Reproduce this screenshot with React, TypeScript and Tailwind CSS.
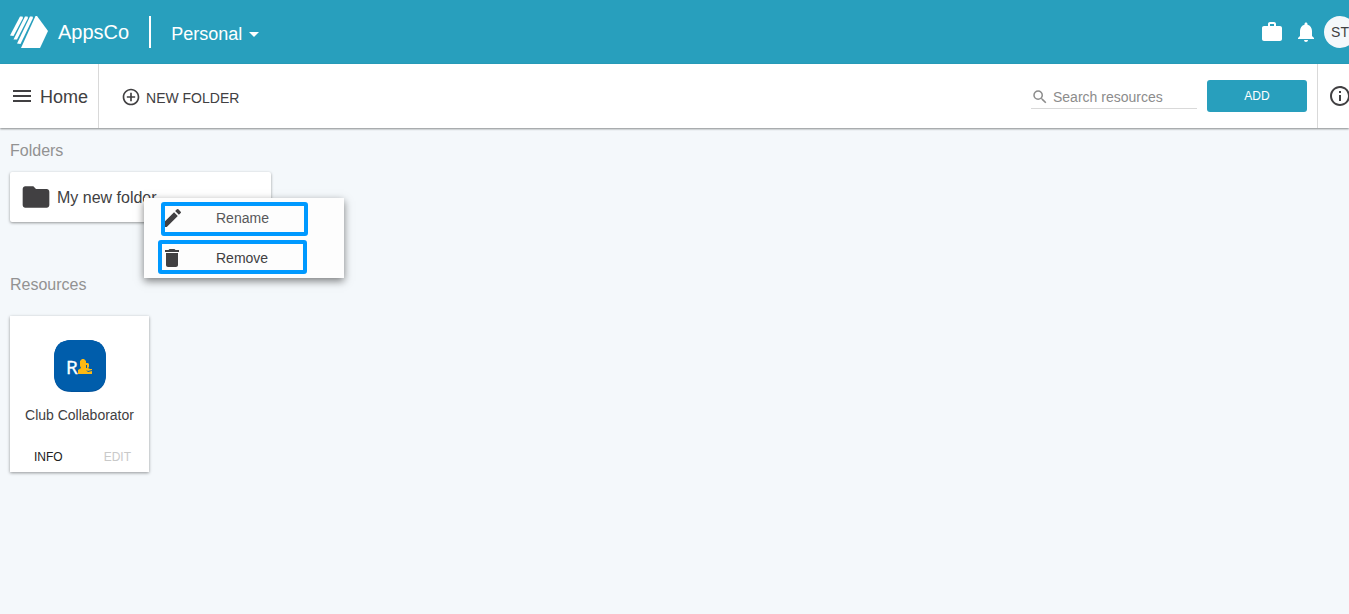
import {
  MdAddCircleOutline,
  MdArrowDropDown,
  MdDelete,
  MdEdit,
  MdFolder,
  MdInfoOutline,
  MdMenu,
  MdNotifications,
  MdSearch,
  MdWork,
} from "react-icons/md";

const Logo = () => (
  <svg width="38" height="32" viewBox="0 0 38 32" fill="#fff" aria-hidden="true">
    <path d="M10 0.5 L12.5 0.5 L13 2 L3.5 20 L0 19.5 Z" />
    <path d="M15 0.5 L17.5 0.5 L18 2 L7 23.5 L3.5 23.5 Z" />
    <path d="M20 0.5 L22.5 0.5 L23 2 L10.5 28 L7 27.5 Z" />
    <path d="M25.5 0 L27 0 L38 15 L30 32 L11 32 Z" />
  </svg>
);

const ClubIcon = () => (
  <svg width="52" height="52" viewBox="0 0 52 52" aria-hidden="true">
    <path
      d="M18 0H34C46 0 52 6 52 18V34C52 46 46 52 34 52H18C6 52 0 46 0 34V18C0 6 6 0 18 0Z"
      fill="#00519b"
    />
    <path
      d="M18 0H34C46 0 52 6 52 18V33C52 45 46 51 34 51H18C6 51 0 45 0 33V18C0 6 6 0 18 0Z"
      fill="#005dab"
    />
    <text
      x="12"
      y="34"
      fill="#fff"
      stroke="#fff"
      strokeWidth="0.4"
      fontFamily="Open Sans, sans-serif"
      fontSize="19"
    >
      R
    </text>
    <path
      d="M24 34V30L27 28L26 26V21L28 19H30L32 21V23H34L35 24V27L34 28L36 29H38V34Z"
      fill="#fdb913"
    />
    <path d="M32 25H33V28H32ZM32 30L34 31L38 30V31L34 32Z" fill="#005dab" />
  </svg>
);

const Header = () => (
  <header className="flex h-16 items-center bg-[#289fbd] pl-[10px] text-white">
    <a href="#" className="flex items-center gap-[10px] text-xl">
      <Logo />
      AppsCo
    </a>
    <div className="mx-5 h-8 w-0.5 bg-white" />
    <button className="flex items-center pt-1 text-lg">
      Personal
      <MdArrowDropDown size={24} />
    </button>
    <div className="-mr-[7px] ml-auto flex items-center">
      <button aria-label="Work" className="mr-[10px]">
        <MdWork size={24} />
      </button>
      <button aria-label="Notifications" className="mr-1.5">
        <MdNotifications size={24} />
      </button>
      <button className="h-8 w-8 rounded-full bg-[#f4f8fb] text-sm text-[#414042]">
        ST
      </button>
    </div>
  </header>
);

const Toolbar = () => (
  <div className="relative flex h-16 items-center bg-white shadow-[0_1px_2px_rgba(0,0,0,0.45)]">
    <button className="flex h-full items-center gap-1.5 border-r border-[#d9d9d9] px-[10px] text-lg">
      <MdMenu size={24} />
      <span className="pt-0.5">Home</span>
    </button>
    <button className="ml-[22px] flex items-center gap-[5px] pt-0.5 text-sm">
      <MdAddCircleOutline size={20} />
      <span className="pt-0.5">NEW FOLDER</span>
    </button>
    <div className="ml-auto flex h-full items-center gap-[10px]">
      <label className="flex w-[166px] items-center gap-1 border-b border-[#d9d9d9] pt-1 pb-px text-[#8c8c8c]">
        <MdSearch size={18} className="shrink-0" />
        <input
          type="text"
          aria-label="Search resources"
          placeholder="Search resources"
          className="w-full min-w-0 text-sm outline-none placeholder:text-[#8c8c8c]"
        />
      </label>
      <button className="h-8 w-[100px] rounded-[3px] bg-[#289fbd] text-xs text-white">
        ADD
      </button>
      <button
        aria-label="Info"
        className="-mr-[3px] flex h-full items-center border-l border-[#d9d9d9] pl-[10px]"
      >
        <MdInfoOutline size={24} />
      </button>
    </div>
  </div>
);

const FolderMenu = () => (
  <div className="absolute top-[26px] left-[134px] z-10 w-[200px] bg-[#fdfdfd] text-sm shadow-[0_3px_8px_rgba(0,0,0,0.5)]">
    <button className="relative flex h-10 w-full items-center gap-8 px-4 text-[#58585a]">
      <MdEdit size={24} className="text-[#414042]" />
      Rename
      <span className="absolute top-1 left-[17px] h-[34px] w-[147px] rounded-[3px] border-4 border-[#0099ff]" />
    </button>
    <button className="relative flex h-10 w-full items-center gap-8 px-4">
      <MdDelete size={24} />
      Remove
      <span className="absolute top-0.5 left-[14px] h-[34px] w-[149px] rounded-[3px] border-4 border-[#0099ff]" />
    </button>
  </div>
);

const App = () => {
  return (
    <div className="min-h-screen overflow-x-hidden bg-[#f4f8fb] font-['Liberation_Sans',Arial,sans-serif] text-[#414042]">
      <Header />
      <Toolbar />

      <main className="px-[10px] py-[10px]">
        <h2 className="pt-px text-base text-[#929292]">Folders</h2>
        <div className="relative mt-[9px] w-[261px]">
          <button className="flex h-[50px] w-full items-center gap-[5px] rounded-xs bg-white px-[10px] shadow-[0_1px_3px_rgba(0,0,0,0.4)]">
            <MdFolder size={32} />
            <span className="pt-0.5">My new folder</span>
          </button>
          <FolderMenu />
        </div>

        <h2 className="mt-[50px] pt-px text-base text-[#929292]">Resources</h2>
        <div className="mt-[19px] flex w-[139px] flex-col items-center bg-white pt-6 shadow-[0_1px_3px_rgba(0,0,0,0.4)]">
          <ClubIcon />
          <p className="mt-[13px] text-sm">Club Collaborator</p>
          <div className="mt-[17px] flex w-full justify-between px-[18px] pl-6 text-xs">
            <button className="h-[30px] text-[#212121]">INFO</button>
            <button className="h-[30px] text-[#c9c9c9]" disabled>
              EDIT
            </button>
          </div>
        </div>
      </main>
    </div>
  );
};

export default App;
